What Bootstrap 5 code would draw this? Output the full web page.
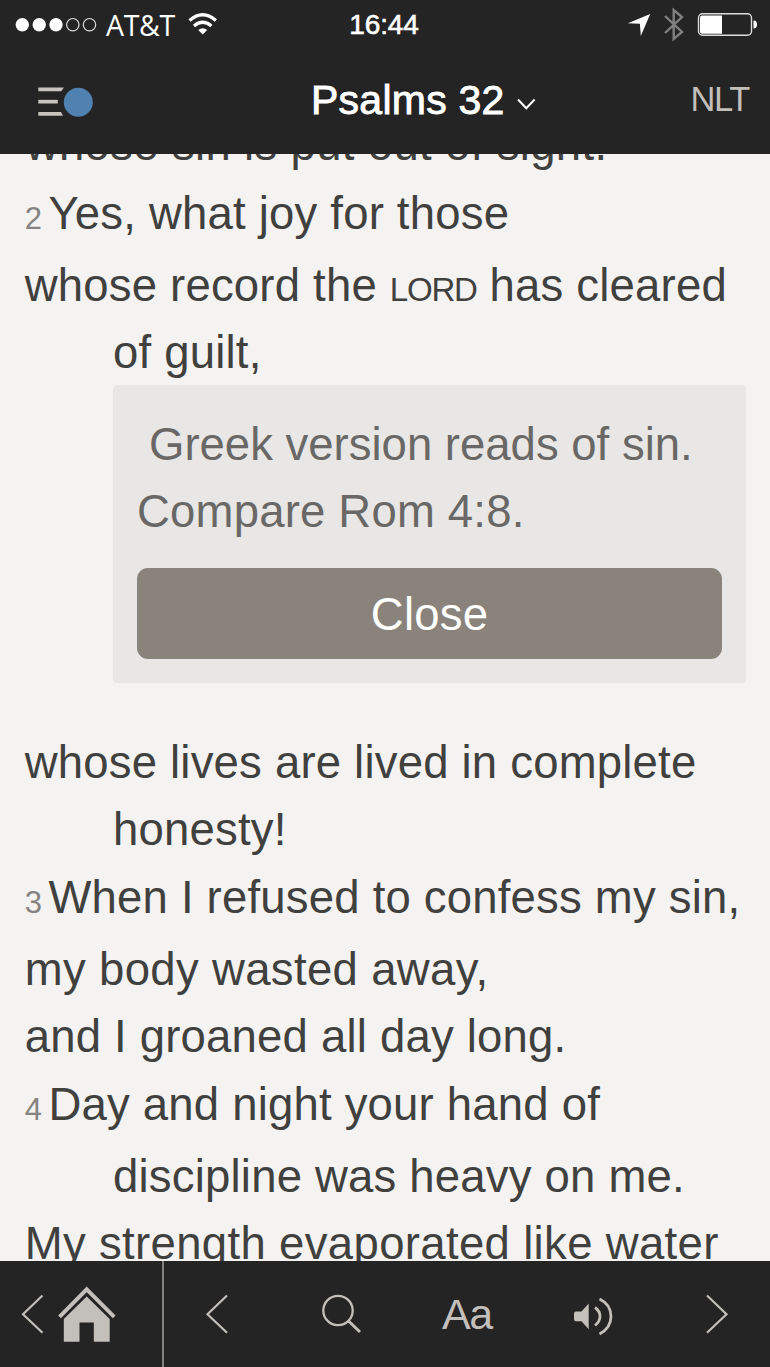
<!DOCTYPE html>
<html lang="en">
<head>
<meta charset="utf-8">
<meta name="viewport" content="width=device-width, initial-scale=1">
<title>Psalms 32</title>
<link href="https://cdn.jsdelivr.net/npm/bootstrap@5.3.0/dist/css/bootstrap.min.css" rel="stylesheet">
<style>
  body { font-family: "Liberation Sans", Arial, sans-serif; background: #f4f3f2; color: #40403e; }
  .app { height: 1367px; width: 770px; }
  .chrome { background: #242424; color: #c3bfba; }
  .status-row { height: 50px; color: #fff; font-size: 27px; line-height: 50px; }
  .side { flex: 1 1 0; }
  .carrier { font-family: "Open Sans", sans-serif; font-size: 28.5px; letter-spacing: -.35px; margin-left: 9px; }
  .clock { font-size: 28px; -webkit-text-stroke: .6px #fff; letter-spacing: -.1px; margin: 0 1px 0 -1px; }
  .title-row { height: 104px; line-height: 104px; }
  .menu-cell { width: 307px; }
  .book-title { font-size: 41px; color: #fff; -webkit-text-stroke: .9px #fff; letter-spacing: .25px; line-height: 101px; text-shadow: 0 -1px 1px #000; }
  .version { font-size: 34.5px; letter-spacing: -1.4px; line-height: 98px; padding-right: 21px; }
  .reader { flex: 1 1 0; overflow: hidden; padding: 0 24px 0 24.7px; font-size: 45.5px; letter-spacing: .2px; }
  .scrolled { margin-top: -43px; }
  .ln { line-height: 67.5px; height: 67.5px; white-space: nowrap; }
  .ln.first-line { margin-bottom: 1px; padding-left: 1px; }
  .ln.numbered { margin-bottom: 4.5px; }
  .ln.hang, .note { margin-left: 88.3px; }
  .ln.wide { letter-spacing: .34px; }
  .ln.tight { letter-spacing: 0; }
  .num { font-size: 31px; color: #858481; margin-right: 6.5px; letter-spacing: 0; }
  .lord { font-size: 33px; letter-spacing: -1.2px; }
  .note { background: #e8e7e5; height: 298px; padding: 25.5px 24px 24px; border-radius: 4px; color: #696866; margin-top: -1.5px; margin-bottom: 45.5px; }
  .note .ln:first-child { padding-left: 12px; }
  .btn-close-note { background: #89837c; color: #fff; height: 91px; border-radius: 11px; font-size: 45.5px; border: 0; margin-top: 22.5px; letter-spacing: .2px; line-height: 94px; padding: 0; }
  .bottom-bar { height: 106px; }
  .home-cell { width: 164px; border-right: 2px solid #83817d; }
  .tool-row { padding-left: 41px; }
  .tool-search { margin-left: 92px; }
  .text-size { font-size: 43px; letter-spacing: -1.5px; line-height: 106px; margin-left: 79px; width: 50px; }
  .tool-audio { margin-left: 80px; }
  .tool-next { margin-left: 91px; }
  svg { display: block; flex: none; }
</style>
</head>
<body>
<div class="app d-flex flex-column overflow-hidden">
  <header class="chrome">
    <div class="status-row d-flex align-items-center">
      <div class="side d-flex align-items-center">
        <svg width="97" height="50" fill="#fff"><circle cx="22.3" cy="24.7" r="6.7"/><circle cx="39.2" cy="24.7" r="6.7"/><circle cx="56" cy="24.7" r="6.7"/><g fill="none" stroke="#ddd" stroke-width="1.2"><circle cx="72.8" cy="24.7" r="6.2"/><circle cx="89.5" cy="24.7" r="6.2"/></g></svg>
        <span class="carrier">AT&amp;T</span>
        <svg class="ms-2" width="40" height="50" viewBox="183 0 40 50"><path d="M202.7 34.5l-4.5-4.5q4.5-3.6 9 0z" fill="#fff"/><path d="M189.5 20.5q13.2-11.5 26.4 0M194 26q8.7-7.5 17.4 0" fill="none" stroke="#fff" stroke-width="3.2"/></svg>
      </div>
      <span class="clock">16:44</span>
      <div class="side d-flex justify-content-end">
        <svg width="150" height="50" viewBox="620 0 150 50"><path d="M650.2 14l-9.4 22-.9-12.2-12-.5z" fill="#fff"/><path d="M665 16l17 16-8.3 7V10l8.3 7-17 16" fill="none" stroke="#808080" stroke-width="2.4"/><rect x="698.5" y="13.8" width="53" height="21.5" rx="4" fill="none" stroke="#ddd" stroke-width="1.4"/><path d="M702 15.5h20v18.3h-20q-2 0-2-2v-14.3q0-2 2-2z" fill="#fff"/><path d="M753.5 20.5q3.5 0 3.5 4t-3.5 4z" fill="#fff"/></svg>
      </div>
    </div>
    <div class="title-row d-flex">
      <div class="menu-cell">
        <svg width="110" height="104" viewBox="0 50 110 104"><g fill="#c9c4be"><path d="M38.3 87.5H64L61.2 91.2H38.3z"/><path d="M38.3 99.8H57.8V103.5H38.3z"/><path d="M38.3 112H61L63 115.7H38.3z"/></g><circle cx="78.3" cy="102.3" r="14.5" fill="#4f82b1"/></svg>
      </div>
      <div class="d-flex ps-1">
        <span class="book-title">Psalms 32</span>
        <svg width="32" height="104" viewBox="505 50 32 104"><path d="M518 99.5l8.3 8.8 8.3-8.8" fill="none" stroke="#fff" stroke-width="2"/></svg>
      </div>
      <div class="side text-end version">NLT</div>
    </div>
  </header>

  <main class="reader">
    <div class="scrolled">
      <div class="ln wide first-line">whose sin is put out of sight.</div>
      <div class="ln numbered"><span class="num">2</span>Yes, what joy for those</div>
      <div class="ln">whose record the <span class="lord">LORD</span> has cleared</div>
      <div class="ln hang">of guilt,</div>
      <div class="note">
        <div class="ln tight">Greek version reads of sin.</div>
        <div class="ln">Compare Rom 4:8.</div>
        <button class="btn btn-close-note w-100 d-block">Close</button>
      </div>
      <div class="ln">whose lives are lived in complete</div>
      <div class="ln hang">honesty!</div>
      <div class="ln numbered"><span class="num">3</span>When I refused to confess my sin,</div>
      <div class="ln wide">my body wasted away,</div>
      <div class="ln">and I groaned all day long.</div>
      <div class="ln numbered"><span class="num">4</span>Day and night your hand of</div>
      <div class="ln hang">discipline was heavy on me.</div>
      <div class="ln wide">My strength evaporated like water</div>
    </div>
  </main>

  <nav class="chrome bottom-bar d-flex">
    <div class="home-cell">
      <svg width="160" height="106" viewBox="0 1261 160 106"><path d="M42.5 1295.5L23 1314.3l19.5 18.5" fill="none" stroke="#c3bfba" stroke-width="2.2"/><path d="M59.5 1316.8L86.7 1289.3l27.5 27.5" fill="none" stroke="#c3bfba" stroke-width="4"/><path d="M63.8 1319L86.7 1296.5l23 22.5v22.7H93.8V1322.5H79.5V1341.7H63.8z" fill="#c3bfba"/></svg>
    </div>
    <div class="tool-row d-flex flex-fill align-items-center">
      <svg width="24" height="106" viewBox="205 1261 24 106" fill="none" stroke="#c3bfba" stroke-width="2.2"><path d="M227 1295.5l-19.5 18.8L227 1332.8"/></svg>
      <svg class="tool-search" width="42" height="106" viewBox="321 1261 42 106" fill="none" stroke="#c3bfba"><circle cx="338" cy="1310.5" r="14.7" stroke-width="2.3"/><path d="M348.5 1321l11.5 11" stroke-width="3"/></svg>
      <span class="text-size">Aa</span>
      <svg class="tool-audio" width="42" height="106" viewBox="572 1261 42 106"><path d="M576 1311.5h5.500l7.200-8V1329.300l-7.200-8H576q-2 0-2-2v-5.800q0-2 2-2z" fill="#c3bfba"/><path d="M595 1307.5q5 3.500 5 8.700t-5 9.300M599.5 1299q11.500 5.500 11.500 17.300T599.5 1334" fill="none" stroke="#c3bfba" stroke-width="2.8"/></svg>
      <svg class="tool-next" width="24" height="106" viewBox="705 1261 24 106" fill="none" stroke="#c3bfba" stroke-width="2.2"><path d="M707 1295.5l19.5 18.800L707 1332.800"/></svg>
    </div>
  </nav>
</div>
<script src="https://cdn.jsdelivr.net/npm/bootstrap@5.3.0/dist/js/bootstrap.bundle.min.js"></script>
</body>
</html>
